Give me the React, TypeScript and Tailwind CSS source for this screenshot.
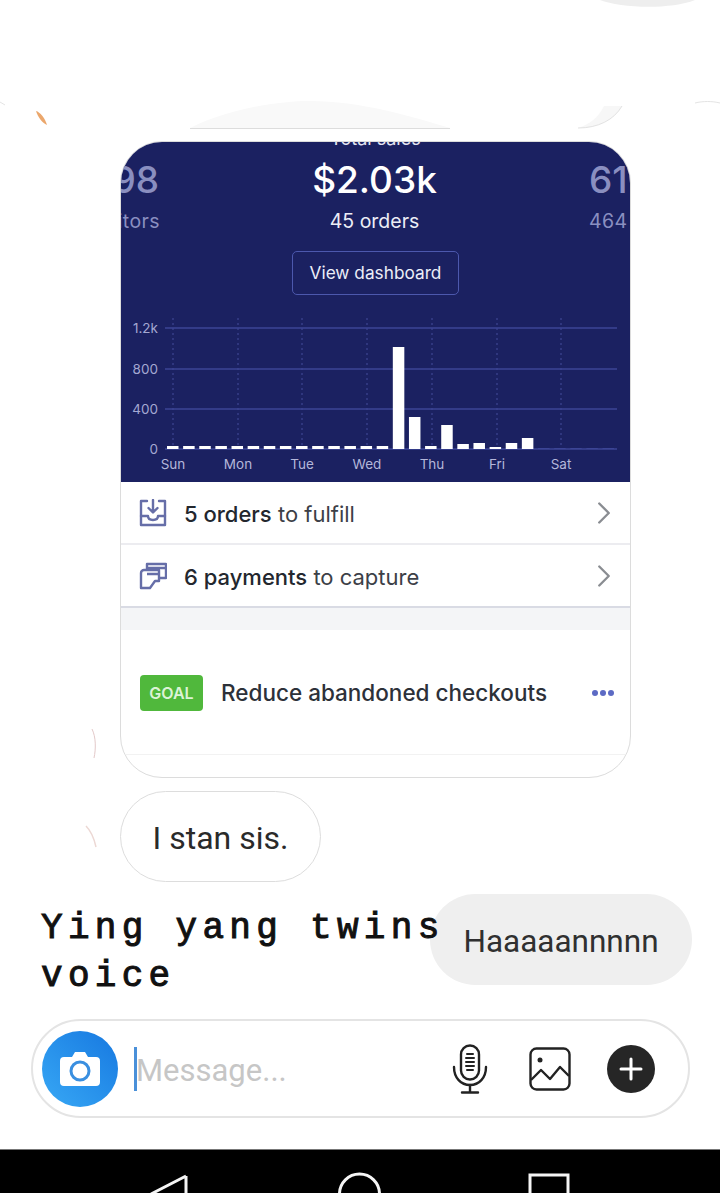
import { ChevronRight } from "lucide-react";

const gridLines = [
    { y: 10, label: "1.2k" },
    { y: 51, label: "800" },
    { y: 91, label: "400" },
    { y: 131, label: "0" },
];

const days = [
    { x: 52, label: "Sun" },
    { x: 117, label: "Mon" },
    { x: 181, label: "Tue" },
    { x: 246, label: "Wed" },
    { x: 311, label: "Thu" },
    { x: 376, label: "Fri" },
    { x: 440, label: "Sat" },
];

// hourly-ish buckets, the last ones have no sales yet
const bars = [3, 3, 3, 3, 3, 3, 3, 3, 3, 3, 3, 3, 3, 3, 102, 32, 3, 24, 5, 6, 2, 6, 11, 1, 1, 1, 1, 1];

function SalesChart() {
    return (
        <svg width="509" height="164" viewBox="0 0 509 164" className="block">
            {days.map((d) => (
                <line key={d.label} x1={d.x} x2={d.x} y1="0" y2="131" stroke="#444d9c" strokeWidth="1" strokeDasharray="2 3" />
            ))}
            {gridLines.map((g) => (
                <g key={g.label}>
                    <line x1="44" x2="496" y1={g.y} y2={g.y} stroke="#3c4596" strokeWidth="1.4" />
                    <text x="37" y={g.y + 4.5} textAnchor="end" fontSize="13.5" fill="#a4a8d2" fontFamily="Inter, sans-serif">
                        {g.label}
                    </text>
                </g>
            ))}
            {bars.map((h, i) => (
                <rect
                    key={i}
                    x={46 + i * 16.13}
                    y={131 - h}
                    width="11.5"
                    height={h}
                    fill={i > 22 ? "#3c4596" : "#ffffff"}
                />
            ))}
            {days.map((d) => (
                <text key={d.label} x={d.x} y="151" textAnchor="middle" fontSize="13.5" fill="#b4b7da" fontFamily="Inter, sans-serif">
                    {d.label}
                </text>
            ))}
        </svg>
    );
}

function OrdersIcon() {
    return (
        <svg width="28" height="28" viewBox="0 0 28 28" fill="none" stroke="#666ea8" strokeWidth="2.4" strokeLinejoin="round" strokeLinecap="round">
            <path d="M8 2H2v24h24V2h-6" />
            <path d="M2 17h7c0 3 2 4 5 4s5-1 5-4h7" />
            <path d="M14 1v12M9.5 9l4.5 4.5L18.500 9" />
        </svg>
    );
}

function PaymentsIcon() {
    return (
        <svg width="28" height="28" viewBox="0 0 28 28" fill="none" stroke="#666ea8" strokeWidth="2.4" strokeLinejoin="round">
            <path d="M8 8V2h19v14h-7" />
            <path d="M8 6h19" />
            <path d="M2 11a3 3 0 0 1 3-3h15v11h-4l-5 7H2z" />
            <path d="M8 12h12" />
        </svg>
    );
}

function CameraIcon() {
    return (
        <svg width="42" height="36" viewBox="0 0 42 36">
            <path
                d="M5 6h8l3-5h10l3 5h8a4 4 0 0 1 4 4v21a4 4 0 0 1-4 4H5a4 4 0 0 1-4-4V10a4 4 0 0 1 4-4z"
                fill="#ffffff"
            />
            <circle cx="21" cy="20" r="9" fill="none" stroke="#3a8fe0" strokeWidth="3" />
        </svg>
    );
}

function MicIcon() {
    return (
        <svg width="36" height="50" viewBox="0 0 36 50" fill="none" stroke="#222222" strokeWidth="2.4" strokeLinecap="round">
            <rect x="9" y="1.500" width="18" height="34" rx="9" />
            <path d="M15 10h6M14 14h8M14 18h8M14 22h8M15 26h6" strokeWidth="2" />
            <path d="M2 23c0 11 7 18 16 18s16-7 16-18" />
            <path d="M18 41v7M10 48.500h16" />
        </svg>
    );
}

function GalleryIcon() {
    return (
        <svg width="42" height="44" viewBox="0 0 42 44" fill="none" stroke="#222222" strokeWidth="2.4" strokeLinejoin="round">
            <rect x="1.500" y="1.500" width="39" height="41" rx="6" />
            <circle cx="11" cy="13" r="2.500" fill="#222222" stroke="none" />
            <path d="M2 33l10-10 9 9 10-12 9 9" />
        </svg>
    );
}

export default function App() {
    return (
        <div className="relative flex h-[1193px] w-[720px] flex-col overflow-hidden bg-white font-['Roboto',sans-serif]">
            {/* leftovers of the story stickers around the thread */}
            <svg className="pointer-events-none absolute inset-0" width="720" height="1193" viewBox="0 0 720 1193" fill="none">
                <path d="M600 0c20 8 70 10 95 0z" fill="#eeeeee" />
                <path d="M36 111c4 1 9 7 11 14c-5-2-9-8-11-14z" fill="#eba76c" />
                <path d="M190 128c40-20 90-27 120-27c50 0 100 15 140 27z" fill="#f9f9f9" />
                <path d="M190 128.500h260" stroke="#dddddd" />
                <path d="M578 128c20 0 36-8 44-22l-18 0c-6 12-14 18-26 22z" fill="#f7f7f7" />
                <path d="M578 128c20 0 36-8 44-22" stroke="#e2e2e2" />
                <path d="M0 102l5 3M695 103c8-2 17-2 25 0" stroke="#e4e4e4" />
                <path d="M92 729c4 8 4 20 2 29" stroke="#e3c9c9" />
                <path d="M86 826c5 5 8 12 10 21" stroke="#ecd8d4" strokeWidth="1.500" />
            </svg>

            <div className="relative ml-[120px] mt-[141px] w-[511px] overflow-hidden rounded-[42px] border border-[#dcdcdc] bg-white">
                <div className="flex h-[340px] flex-col bg-[#1b2161] font-['Inter',sans-serif]">
                    <div className="-mt-[14px] text-center text-[18px] leading-[22px] text-[#e4e5f2]">Total sales</div>
                    <div className="mt-[7px] flex h-[80px] items-start">
                        <div className="flex w-[39px] flex-col items-end whitespace-nowrap text-[#8a8fc0]">
                            <div className="mr-[1px] text-[37px] font-medium leading-[46px]">98</div>
                            <div className="mt-[6px] text-[19.500px] leading-[24px] tracking-[0.4px]">Visitors</div>
                        </div>
                        <div className="flex-1 text-center text-white">
                            <div className="text-[37px] font-medium leading-[46px]">$2.03k</div>
                            <div className="mt-[6px] text-[19.500px] leading-[24px] text-[#ecedf6]">45 orders</div>
                        </div>
                        <div className="w-[41px] whitespace-nowrap text-[#8a8fc0]">
                            <div className="text-[37px] font-medium leading-[46px]">61</div>
                            <div className="mt-[6px] text-[19.500px] leading-[24px] tracking-[0.4px]">464</div>
                        </div>
                    </div>
                    <div className="mt-[14px] flex justify-center">
                        <button className="h-[44px] w-[167px] rounded-[5px] border border-[#4c58ad] text-[17.250px] text-[#eceef8]">
                            View dashboard
                        </button>
                    </div>
                    <div className="mt-[23px]">
                        <SalesChart />
                    </div>
                </div>

                <div className="flex h-[63px] items-center border-b-2 border-[#ececf0] pl-[18px] pr-[7px] font-['Inter',sans-serif]">
                    <OrdersIcon />
                    <div className="ml-[17px] flex-1 pt-[3px] text-[22px] text-[#3c4047]">
                        <span className="font-medium text-[#23272e]">5 orders</span> to fulfill
                    </div>
                    <ChevronRight size={38} color="#8a8d92" strokeWidth={1.5} />
                </div>
                <div className="flex h-[63px] items-center border-b-2 border-[#d9dbe4] pl-[18px] pr-[7px] font-['Inter',sans-serif]">
                    <PaymentsIcon />
                    <div className="ml-[17px] flex-1 pt-[3px] text-[22px] text-[#3c4047]">
                        <span className="font-medium text-[#23272e]">6 payments</span> to capture
                    </div>
                    <ChevronRight size={38} color="#8a8d92" strokeWidth={1.5} />
                </div>
                <div className="h-[22px] bg-[#f4f5f7]" />
                <div className="flex h-[125px] items-center border-b border-[#f2f2f2] pl-[19px] pr-[16px] pt-[2px] font-['Inter',sans-serif]">
                    <div className="flex h-[36px] w-[63px] items-center justify-center rounded-[4px] bg-[#50b83c] text-[16px] font-semibold text-[#dcf3d6]">
                        GOAL
                    </div>
                    <div className="ml-[18px] flex-1 whitespace-nowrap text-[22.500px] font-medium text-[#2d3139]">
                        Reduce abandoned checkouts
                    </div>
                    <div className="flex gap-[2px]">
                        <span className="h-[6px] w-[6px] rounded-full bg-[#5c6ac4]" />
                        <span className="h-[6px] w-[6px] rounded-full bg-[#5c6ac4]" />
                        <span className="h-[6px] w-[6px] rounded-full bg-[#5c6ac4]" />
                    </div>
                </div>
                <div className="h-[22px]" />
            </div>

            <div className="ml-[120px] mt-[13px] flex h-[91px] w-[201px] items-center justify-center rounded-full border border-[#dddddd] pt-[2px] text-[32px] text-[#2a2a2a]">
                I stan sis.
            </div>

            <div className="mt-[12px] flex items-start pl-[41px]">
                <div className="relative z-10 mt-[11px] w-[410px] whitespace-pre-wrap font-['Liberation_Mono',monospace] text-[36px] leading-[48px] tracking-[5.300px] text-[#111111] [-webkit-text-stroke:1px_#111111]">
                    Ying yang twins voice
                </div>
                <div className="-ml-[21px] flex h-[91px] w-[262px] items-center justify-center rounded-full bg-[#efefef] pt-[4px] text-[31.500px] text-[#303030]">
                    Haaaaannnnn
                </div>
            </div>

            <div className="ml-[31px] mt-[18px] flex h-[99px] w-[659px] items-center rounded-full border-2 border-[#e4e4e4] pl-[9px] pr-[33px]">
                <div className="flex h-[76px] w-[76px] items-center justify-center rounded-full bg-gradient-to-tr from-[#38a8f5] to-[#1778e0]">
                    <CameraIcon />
                </div>
                <div className="ml-[16px] h-[44px] w-[3px] bg-[#4a90d9]" />
                <div className="-ml-[1px] flex-1 pt-[5px] text-[31px] text-[#c6c6c6]">Message...</div>
                <div className="flex items-center">
                    <MicIcon />
                    <div className="ml-[41px]">
                        <GalleryIcon />
                    </div>
                    <div className="ml-[36px] flex h-[48px] w-[48px] items-center justify-center rounded-full bg-[#262626]">
                        <svg width="24" height="24" viewBox="0 0 24 24" stroke="#ffffff" strokeWidth="3" strokeLinecap="round">
                            <path d="M12 2v20M2 12h20" />
                        </svg>
                    </div>
                </div>
            </div>

            {/* android nav bar, cut off at the bottom edge */}
            <div className="mt-auto h-[44px] border-t border-[#777777] bg-black">
                <svg width="720" height="44" viewBox="0 0 720 44" fill="none" stroke="#f5f5f5" strokeWidth="3">
                    <path d="M186 26L151 44M186 26V46" />
                    <circle cx="359.500" cy="44" r="20" />
                    <rect x="530" y="25" width="38" height="40" />
                </svg>
            </div>
        </div>
    );
}
